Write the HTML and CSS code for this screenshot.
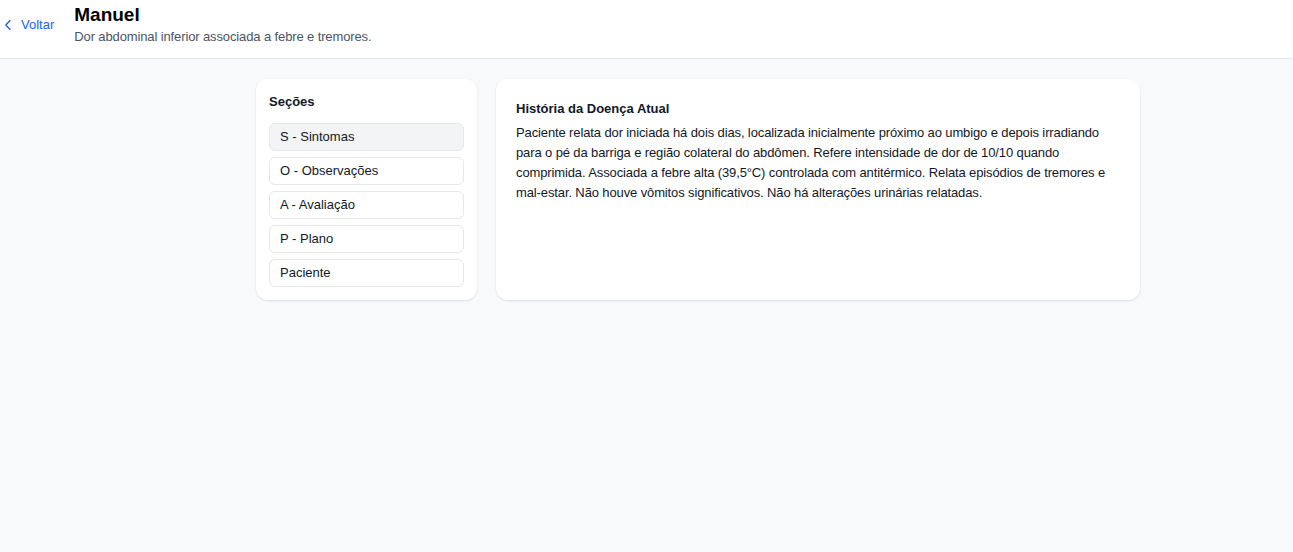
FILE: index.html
```html
<!DOCTYPE html>
<html lang="pt">
<head>
<meta charset="utf-8">
<link rel="stylesheet" href="styles.css">
</head>
<body>
<header class="topbar">
  <a class="back" href="#">
    <svg class="chev" width="8" height="12" viewBox="0 0 8 12"><path d="M6 1.5 1.8 6 6 10.5" fill="none" stroke="#2563eb" stroke-width="1.4" stroke-linecap="round" stroke-linejoin="round"/></svg>
    <span>Voltar</span>
  </a>
  <div class="heading">
    <h1>Manuel</h1>
    <p>Dor abdominal inferior associada a febre e tremores.</p>
  </div>
</header>
<main class="content">
  <aside class="card sidebar">
    <h2>Seções</h2>
    <ul class="nav">
      <li class="item active">S - Sintomas</li>
      <li class="item">O - Observações</li>
      <li class="item">A - Avaliação</li>
      <li class="item">P - Plano</li>
      <li class="item">Paciente</li>
    </ul>
  </aside>
  <section class="card detail">
    <h3>História da Doença Atual</h3>
    <p>Paciente relata dor iniciada há dois dias, localizada inicialmente próximo ao umbigo e depois irradiando para o pé da barriga e região colateral do abdômen. Refere intensidade de dor de 10/10 quando comprimida. Associada a febre alta (39,5°C) controlada com antitérmico. Relata episódios de tremores e mal-estar. Não houve vômitos significativos. Não há alterações urinárias relatadas.</p>
  </section>
</main>
</body>
</html>
```
FILE: styles.css
```css
* { box-sizing: border-box; }
html, body { margin: 0; padding: 0; }
body {
  font-family: "Liberation Sans", Arial, sans-serif;
  background: #f8f9fb;
  color: #111827;
  height: 552px;
}
.topbar {
  background: #ffffff;
  border-bottom: 1px solid #e5e7eb;
  height: 59px;
  display: flex;
  align-items: flex-start;
  padding: 5px 0 0 4px;
}
.back {
  display: flex;
  align-items: center;
  gap: 9px;
  color: #2563eb;
  text-decoration: none;
  font-size: 13px;
  margin-top: 12px;
}
.heading { margin-left: 20px; }
.heading h1 {
  margin: 0;
  font-size: 19px;
  font-weight: 700;
  line-height: 20px;
  color: #000;
}
.heading p {
  margin: 3px 0 0;
  font-size: 13px;
  line-height: 18px;
  color: #4b5563;
  letter-spacing: -0.12px;
}
.content {
  display: flex;
  align-items: flex-start;
  gap: 19px;
  padding: 20px 0 0 256px;
}
.card {
  background: #fff;
  border-radius: 12px;
  box-shadow: 0 1px 3px rgba(0,0,0,0.08), 0 1px 2px rgba(0,0,0,0.04);
}
.sidebar {
  width: 221px;
  padding: 14px 13px 13px;
}
.sidebar h2 {
  margin: 0 0 12px;
  font-size: 13px;
  font-weight: 600;
  line-height: 18px;
}
.nav { list-style: none; margin: 0; padding: 0; display: flex; flex-direction: column; gap: 6px; }
.item {
  height: 28px;
  border: 1px solid #e5e7eb;
  border-radius: 6px;
  padding: 0 10px;
  font-size: 13px;
  line-height: 26px;
  background: #fff;
}
.item.active { background: #f3f4f6; }
.detail {
  width: 644px;
  height: 221px;
  padding: 21px 20px;
}
.detail h3 {
  margin: 0 0 5px;
  font-size: 13px;
  font-weight: 700;
  line-height: 18px;
}
.detail p {
  margin: 0;
  font-size: 13px;
  line-height: 20px;
  color: #111827;
  letter-spacing: -0.12px;
}
```
